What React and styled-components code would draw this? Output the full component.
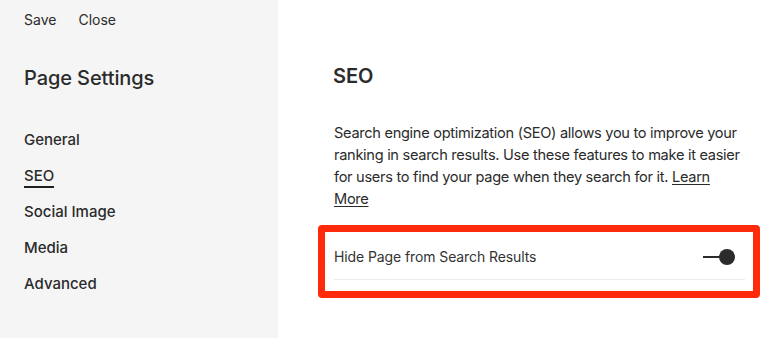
import React, { useState } from 'react';
import styled, { createGlobalStyle } from 'styled-components';

const GlobalStyle = createGlobalStyle`
html, body {
    margin: 0;
    padding: 0;
    background: #fff;
}
body {
    font-family: Inter, "Liberation Sans", sans-serif;
    color: #2b2b2b;
    -webkit-font-smoothing: antialiased;
}
`;

const Layout = styled.div`
display: flex;
width: 776px;
height: 338px;
overflow: hidden;
`;

const Sidebar = styled.aside`
width: 278px;
flex-shrink: 0;
background: #f5f5f5;
padding: 10px 24px 0;
box-sizing: border-box;
`;

const TopActions = styled.div`
display: flex;
gap: 22px;
`;

const ActionButton = styled.button`
border: none;
background: none;
padding: 0;
font: inherit;
font-size: 14px;
line-height: 20px;
color: #2b2b2b;
cursor: pointer;
`;

const SidebarTitle = styled.h1`
margin: 35px 0 0;
font-size: 20px;
font-weight: 500;
line-height: 26px;
letter-spacing: -0.1px;
`;

const NavList = styled.ul`
list-style: none;
margin: 39px 0 0;
padding: 0;
display: flex;
flex-direction: column;
gap: 14px;
`;

const NavItem = styled.li`
display: flex;
height: 22px;
font-size: 15px;
font-weight: 500;
`;

const NavLink = styled.a`
color: #2b2b2b;
text-decoration: none;
line-height: 20px;
height: 20px;
border-bottom: 2px solid ${({ $active }) => ($active ? '#1f1f1f' : 'transparent')};
cursor: pointer;
`;

const Content = styled.main`
flex-grow: 1;
padding: 64px 16px 0 40px;
box-sizing: border-box;
`;

const SectionTitle = styled.h2`
margin: 0 0 0 15px;
font-size: 20px;
font-weight: 600;
line-height: 24px;
`;

const Description = styled.p`
margin: 34px 0 0 16px;
width: 410px;
font-size: 14.6px;
line-height: 22px;
letter-spacing: -0.3px;
color: #2b2b2b;
& a {
    color: inherit;
    text-decoration: underline;
    text-underline-offset: 2px;
}
`;

const Highlight = styled.div`
margin-top: 15px;
border: 7px solid #ff2a0a;
border-radius: 4px;
padding: 2px 8px 11px 9px;
`;

const SettingRow = styled.div`
display: flex;
align-items: center;
justify-content: space-between;
height: 45px;
border-bottom: 1px solid #ececec;
`;

const SettingLabel = styled.span`
font-size: 14px;
letter-spacing: -0.1px;
color: #333;
`;

const Toggle = styled.button`
position: relative;
width: 34px;
height: 18px;
margin-right: 8px;
padding: 0;
border: none;
background: none;
cursor: pointer;
&::before {
    content: '';
    position: absolute;
    left: 0;
    top: 8px;
    width: 20px;
    height: 2px;
    background: #2b2b2b;
}
&::after {
    content: '';
    position: absolute;
    left: ${({ $on }) => ($on ? '16px' : '0')};
    top: 1px;
    width: 16px;
    height: 16px;
    border-radius: 50%;
    background: #2b2b2b;
}
`;

const navItems = ['General', 'SEO', 'Social Image', 'Media', 'Advanced'];

export default function App() {
    const [active, setActive] = useState('SEO');
    const [hidden, setHidden] = useState(true);

    return (
        <>
            <GlobalStyle />
            <Layout>
                <Sidebar>
                    <TopActions>
                        <ActionButton>Save</ActionButton>
                        <ActionButton>Close</ActionButton>
                    </TopActions>
                    <SidebarTitle>Page Settings</SidebarTitle>
                    <NavList>
                        {navItems.map(item => (
                            <NavItem key={item}>
                                <NavLink
                                    $active={item === active}
                                    onClick={() => setActive(item)}
                                >{item}</NavLink>
                            </NavItem>
                        ))}
                    </NavList>
                </Sidebar>
                <Content>
                    <SectionTitle>SEO</SectionTitle>
                    <Description>
                        Search engine optimization (SEO) allows you to improve your
                        ranking in search results. Use these features to make it easier
                        for users to find your page when they search for it. <a>Learn More</a>
                    </Description>
                    <Highlight>
                        <SettingRow>
                            <SettingLabel>Hide Page from Search Results</SettingLabel>
                            <Toggle $on={hidden} onClick={() => setHidden(!hidden)} />
                        </SettingRow>
                    </Highlight>
                </Content>
            </Layout>
        </>
    );
}
